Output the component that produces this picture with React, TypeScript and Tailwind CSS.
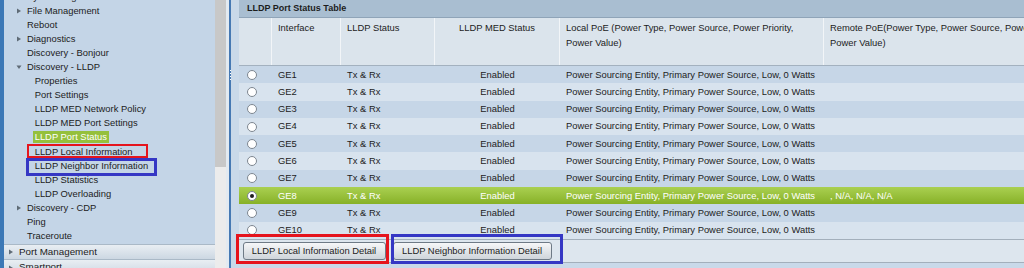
import React from 'react';

type NavItem = {
  label: string;
  level: number;
  arrow?: 'right' | 'down';
  active?: boolean;
};

const navItems: NavItem[] = [
  { label: 'System Log', level: 0, arrow: 'right' },
  { label: 'File Management', level: 0, arrow: 'right' },
  { label: 'Reboot', level: 0 },
  { label: 'Diagnostics', level: 0, arrow: 'right' },
  { label: 'Discovery - Bonjour', level: 0 },
  { label: 'Discovery - LLDP', level: 0, arrow: 'down' },
  { label: 'Properties', level: 1 },
  { label: 'Port Settings', level: 1 },
  { label: 'LLDP MED Network Policy', level: 1 },
  { label: 'LLDP MED Port Settings', level: 1 },
  { label: 'LLDP Port Status', level: 1, active: true },
  { label: 'LLDP Local Information', level: 1 },
  { label: 'LLDP Neighbor Information', level: 1 },
  { label: 'LLDP Statistics', level: 1 },
  { label: 'LLDP Overloading', level: 1 },
  { label: 'Discovery - CDP', level: 0, arrow: 'right' },
  { label: 'Ping', level: 0 },
  { label: 'Traceroute', level: 0 },
];

const Arrow: React.FC<{ dir: 'right' | 'down' }> = ({ dir }) => (
  <svg width="6" height="6" viewBox="0 0 6 6" className="shrink-0">
    {dir === 'right' ? (
      <polygon points="1,0.5 5,3 1,5.5" fill="#5f6b76" />
    ) : (
      <polygon points="0.5,1.5 5.5,1.5 3,5" fill="#5f6b76" />
    )}
  </svg>
);

const localPoe = 'Power Sourcing Entity, Primary Power Source, Low, 0 Watts';
const ports = Array.from({ length: 10 }, (_, i) => `GE${i + 1}`);

const cols = 'grid grid-cols-[33px_69px_94px_125px_264px_300px]';

const App: React.FC = () => {
  return (
    <div className="flex w-[1024px] h-[268px] overflow-hidden font-['Liberation_Sans',Arial,sans-serif] text-[9.4px] text-[#1c1c1c]">
      {/* left edge */}
      <div className="w-[4px] bg-[#3c78b6] shrink-0" />

      {/* sidebar */}
      <div className="relative w-[211px] shrink-0 bg-[#c4d5e7] flex flex-col">
        <div className="-mt-[10.5px] flex flex-col">
          {navItems.map((item) => (
            <div
              key={item.label}
              className={`h-[14.1px] flex items-center ${item.level === 0 ? 'pl-[12px]' : 'pl-[28.7px]'}`}
            >
              {item.level === 0 && (
                <span className="w-[11px] flex items-center">
                  {item.arrow && <Arrow dir={item.arrow} />}
                </span>
              )}
              <span
                className={
                  item.active
                    ? 'bg-[#95c03c] text-white px-[2px] h-[12px] leading-[12px]'
                    : item.level === 0
                      ? ''
                      : 'px-[2px]'
                }
              >
                {item.label}
              </span>
            </div>
          ))}
        </div>
        <div className="mt-[0.5px] h-[17px] flex items-center gap-[5px] pl-[4px] bg-gradient-to-b from-[#e9eef3] to-[#ccd7e2] border-y border-[#aab9c7] text-[9.8px]">
          <Arrow dir="right" />
          <span>Port Management</span>
        </div>
        <div className="h-[17px] flex items-center gap-[5px] pl-[4px] bg-gradient-to-b from-[#e9eef3] to-[#ccd7e2] border-b border-[#aab9c7] text-[9.8px]">
          <Arrow dir="right" />
          <span>Smartport</span>
        </div>

        {/* annotation boxes */}
        <div className="absolute left-[22.7px] top-[144px] w-[121.6px] h-[14px] border-2 border-[#e5141d]" />
        <div className="absolute left-[21.7px] top-[158px] w-[131.6px] h-[18px] border-[3px] border-[#3537c4]" />
      </div>

      {/* scrollbar */}
      <div className="w-[11px] shrink-0 flex flex-col">
        <div className="h-[167px] bg-[#c8c8c8]" />
        <div className="flex-1 bg-[#ececec]" />
      </div>
      <div className="w-[3px] shrink-0 bg-[#e3eaf1]" />

      {/* splitter */}
      <div className="w-[2px] shrink-0 bg-[#4679b3] flex flex-col items-center pt-[70px] gap-[2px]">
        {[0, 1, 2, 3].map((d) => (
          <span key={d} className="w-[1px] h-[1px] bg-white" />
        ))}
      </div>

      {/* content */}
      <div className="relative flex-1 min-w-0 bg-[#c9d9e9] pl-[8px] overflow-hidden">
        <div className="w-[900px] flex flex-col">
          <div className="h-[18px] bg-[#a9bed1] border-b border-[#8fa4b8] flex items-center pl-[8px] font-bold text-[9px]">
            LLDP Port Status Table
          </div>

          <div className={`${cols} h-[48px] bg-[#dbe4ec] border-b border-[#a3b1bf] leading-[15.3px]`}>
            <div className="border-r border-[#f2f5f8]" />
            <div className="border-r border-[#f2f5f8] pl-[6px] pt-[2px]">Interface</div>
            <div className="border-r border-[#f2f5f8] pl-[6px] pt-[2px]">LLDP Status</div>
            <div className="border-r border-[#f2f5f8] text-center pt-[2px]">LLDP MED Status</div>
            <div className="border-r border-[#f2f5f8] pl-[6px] pt-[2px]">
              Local PoE (Power Type, Power Source, Power Priority,
              <br />
              Power Value)
            </div>
            <div className="pl-[6px] pt-[2px] whitespace-nowrap">
              Remote PoE(Power Type, Power Source, Power Priority,
              <br />
              Power Value)
            </div>
          </div>

          {ports.map((p, i) => {
            const selected = p === 'GE8';
            const bg = selected
              ? 'bg-gradient-to-b from-[#aad050] to-[#87b126] text-white'
              : i % 2 === 0
                ? 'bg-[#c6d6e7]'
                : 'bg-[#d8e3ee]';
            return (
              <div key={p} className={`${cols} h-[17.3px] items-center ${bg}`}>
                <div className="pl-[8px] flex items-center">
                  <span className="w-[10px] h-[10px] rounded-full bg-white border border-[#7d8690] flex items-center justify-center">
                    {selected && <span className="w-[4px] h-[4px] rounded-full bg-[#1e1e1e]" />}
                  </span>
                </div>
                <div className="pl-[6px]">{p}</div>
                <div className="pl-[6px]">Tx &amp; Rx</div>
                <div className="text-center">Enabled</div>
                <div className="pl-[6px] whitespace-nowrap">{localPoe}</div>
                <div className="pl-[6px] whitespace-nowrap">{selected ? ', N/A, N/A, N/A' : ''}</div>
              </div>
            );
          })}

          <div className="h-[24px] bg-[#dde6ee] border-y border-[#a3afbb] flex items-center gap-[7px] pl-[3.5px]">
            <button className="w-[143px] h-[18px] rounded-[3px] border border-[#6e7a86] bg-gradient-to-b from-[#f6f7f8] to-[#cfd5db] text-[#1c1c1c] text-[9.4px]">
              LLDP Local Information Detail
            </button>
            <button className="w-[159px] h-[18px] rounded-[3px] border border-[#6e7a86] bg-gradient-to-b from-[#f6f7f8] to-[#cfd5db] text-[#1c1c1c] text-[9.4px]">
              LLDP Neighbor Information Detail
            </button>
          </div>
        </div>

        {/* annotation boxes */}
        <div className="absolute left-[5px] top-[234px] w-[153px] h-[30px] border-[3px] border-[#e5141d]" />
        <div className="absolute left-[160px] top-[234px] w-[172px] h-[30px] border-[3px] border-[#3537c4]" />
      </div>
    </div>
  );
};

export default App;
